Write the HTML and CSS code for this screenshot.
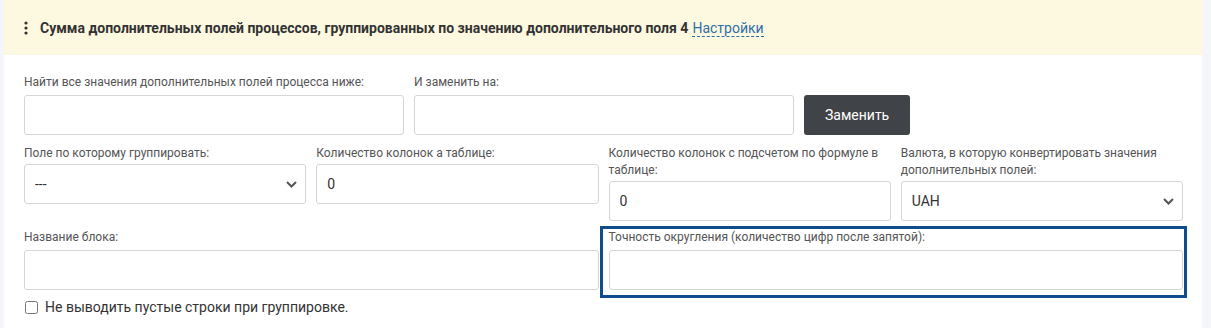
FILE: index.html
```html
<!DOCTYPE html>
<html lang="ru">
<head>
    <meta charset="UTF-8">
    <meta name="viewport" content="width=device-width, initial-scale=1.0">
    <title>Сумма дополнительных полей</title>
    <link rel="stylesheet" href="styles.css">
</head>
<body>
    <div class="widget">
        <div class="widget-header">
            <svg class="kebab" width="4" height="14" viewBox="0 0 4 14">
                <circle cx="2" cy="2" r="1.6"/>
                <circle cx="2" cy="7" r="1.6"/>
                <circle cx="2" cy="12" r="1.6"/>
            </svg>
            <span class="widget-title">Сумма дополнительных полей процессов, группированных по значению дополнительного поля 4</span>
            <a href="#" class="settings-link">Настройки</a>
        </div>

        <div class="widget-body">
            <!-- Replace values -->
            <div class="row row-replace">
                <div class="field">
                    <label>Найти все значения дополнительных полей процесса ниже:</label>
                    <input type="text" class="control">
                </div>
                <div class="field">
                    <label>И заменить на:</label>
                    <input type="text" class="control">
                </div>
                <button type="button" class="btn-dark">Заменить</button>
            </div>

            <!-- Grouping options -->
            <div class="row row-four">
                <div class="field">
                    <label>Поле по которому группировать:</label>
                    <div class="select-wrap">
                        <select class="control">
                            <option>---</option>
                        </select>
                        <svg class="chevron" width="11" height="7" viewBox="0 0 11 7"><path d="M1 1l4.5 4.5L10 1"/></svg>
                    </div>
                </div>
                <div class="field">
                    <label>Количество колонок а таблице:</label>
                    <input type="text" class="control" value="0">
                </div>
                <div class="field">
                    <label>Количество колонок с подсчетом по формуле в таблице:</label>
                    <input type="text" class="control" value="0">
                </div>
                <div class="field">
                    <label>Валюта, в которую конвертировать значения дополнительных полей:</label>
                    <div class="select-wrap">
                        <select class="control">
                            <option>UAH</option>
                        </select>
                        <svg class="chevron" width="11" height="7" viewBox="0 0 11 7"><path d="M1 1l4.5 4.5L10 1"/></svg>
                    </div>
                </div>
            </div>

            <!-- Block name & precision -->
            <div class="row row-two">
                <div class="field">
                    <label>Название блока:</label>
                    <input type="text" class="control">
                </div>
                <div class="field field-active">
                    <label>Точность округления (количество цифр после запятой):</label>
                    <input type="text" class="control">
                </div>
            </div>

            <label class="check">
                <input type="checkbox">
                <span>Не выводить пустые строки при группировке.</span>
            </label>
        </div>
    </div>
</body>
</html>
```

FILE: styles.css
```css
body {
    margin: 0;
    background: #f4f6f9;
    font-family: Roboto, "Liberation Sans", sans-serif;
    color: #333;
}

.widget {
    width: 1198px;
    margin-left: 4px;
    background: #fff;
    height: 328px;
}

.widget-header {
    height: 55px;
    background: #fdf9e0;
    display: flex;
    align-items: center;
    padding-left: 20px;
    box-sizing: border-box;
    font-size: 14px;
}

.kebab {
    fill: #333;
    margin-right: 12px;
    margin-top: 1px;
}

.widget-title {
    font-weight: 700;
    color: #333;
}

.settings-link {
    margin-left: 4px;
    color: #2f6ea8;
    text-decoration: none;
    border-bottom: 1px dashed #2f6ea8;
    line-height: 16px;
    margin-top: 2px;
}

.widget-body {
    padding: 19px 19px 0 20px;
}

.row {
    display: grid;
    column-gap: 10px;
    align-items: start;
    margin-bottom: 10px;
}

.row-replace {
    grid-template-columns: 380px 380px auto;
    justify-content: start;
    align-items: end;
}

.row-four {
    grid-template-columns: repeat(4, 1fr);
    margin-bottom: 8px;
}

.row-four .field label {
    margin-bottom: 2px;
}

.row-two {
    grid-template-columns: 1fr 1fr;
    margin-bottom: 9px;
}

.field {
    display: flex;
    flex-direction: column;
    position: relative;
}

.field label {
    font-size: 12px;
    line-height: 17px;
    color: #555;
    margin-bottom: 4px;
}

.field-active::after {
    content: "";
    position: absolute;
    top: -3px;
    left: -9px;
    right: -4px;
    bottom: -8px;
    border: 3px solid #0f4d8e;
    pointer-events: none;
}

.control {
    height: 40px;
    box-sizing: border-box;
    border: 1px solid #d6d6d6;
    border-radius: 3px;
    background: #fff;
    padding: 0 10px;
    font-family: Roboto, "Liberation Sans", sans-serif;
    font-size: 14px;
    color: #333;
    width: 100%;
}

.select-wrap {
    position: relative;
}

.select-wrap select {
    appearance: none;
    -webkit-appearance: none;
}

.chevron {
    position: absolute;
    right: 9px;
    top: 17px;
    fill: none;
    stroke: #555;
    stroke-width: 2;
}

.btn-dark {
    height: 40px;
    padding: 0 21px;
    background: #404347;
    color: #fff;
    border: none;
    border-radius: 3px;
    font-family: Roboto, "Liberation Sans", sans-serif;
    font-size: 14px;
    cursor: pointer;
}

.check {
    display: flex;
    align-items: center;
    font-size: 14px;
    color: #333;
}

.check input {
    margin: 0 7px 0 1px;
    width: 13px;
    height: 13px;
}
```
